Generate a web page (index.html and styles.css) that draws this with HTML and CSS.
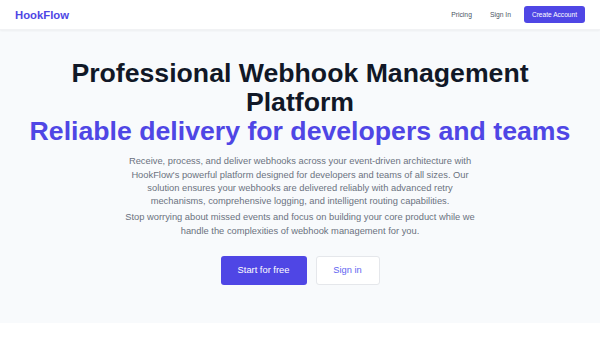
FILE: index.html
```html
<!DOCTYPE html>
<html lang="en">
<head>
    <meta charset="UTF-8">
    <meta name="viewport" content="width=device-width, initial-scale=1.0">
    <title>HookFlow - Webhook Management</title>
    <link rel="stylesheet" href="styles.css">
</head>
<body>
    <header class="site-header">
        <a class="logo" href="#">HookFlow</a>
        <nav class="main-nav">
            <a href="#" class="nav-link">Pricing</a>
            <a href="#" class="nav-link">Sign In</a>
            <a href="#" class="nav-btn">Create Account</a>
        </nav>
    </header>

    <section class="hero">
        <h1 class="hero-title">
            Professional Webhook Management Platform
            <span class="hero-accent">Reliable delivery for developers and teams</span>
        </h1>
        <p class="hero-text">Receive, process, and deliver webhooks across your event-driven architecture with HookFlow's powerful platform designed for developers and teams of all sizes. Our solution ensures your webhooks are delivered reliably with advanced retry mechanisms, comprehensive logging, and intelligent routing capabilities.</p>
        <p class="hero-text">Stop worrying about missed events and focus on building your core product while we handle the complexities of webhook management for you.</p>
        <div class="hero-actions">
            <a href="#" class="btn btn-primary">Start for free</a>
            <a href="#" class="btn btn-outline">Sign in</a>
        </div>
    </section>

    <section class="below"></section>
</body>
</html>
```

FILE: styles.css
```css
body {
    font-family: "Liberation Sans", Arial, sans-serif;
    margin: 0;
    padding: 0;
    background-color: #fff;
    color: #111827;
}

a {
    text-decoration: none;
}

.site-header {
    display: flex;
    justify-content: space-between;
    align-items: center;
    height: 30px;
    padding: 0 15px;
    background: #fff;
    box-shadow: 0 1px 2px rgba(0, 0, 0, 0.05);
    border-bottom: 1px solid #f1f2f4;
    box-sizing: border-box;
    position: relative;
}

.logo {
    font-size: 11.3px;
    font-weight: bold;
    color: #4f46e5;
}

.main-nav {
    display: flex;
    align-items: center;
}

.nav-link {
    font-size: 6.75px;
    color: #4b5563;
    margin-right: 18px;
}

.nav-link + .nav-link {
    margin-right: 13px;
}

.nav-btn {
    font-size: 6.6px;
    color: #fff;
    background: #4f46e5;
    border-radius: 3px;
    padding: 0 8px;
    height: 17px;
    line-height: 17px;
}

.hero {
    background: #f8fafc;
    padding: 29px 20px 38px;
    text-align: center;
}

.hero-title {
    margin: 0;
    font-size: 26.67px;
    line-height: 1.1;
    font-weight: bold;
    color: #111827;
}

.hero-accent {
    display: block;
    line-height: 1;
    color: #4f46e5;
}

.hero-text {
    max-width: 360px;
    margin: 11px auto 0;
    font-size: 9.33px;
    line-height: 13.33px;
    color: #6b7280;
}

.hero-text + .hero-text {
    margin-top: 2.7px;
}

.hero-actions {
    display: flex;
    justify-content: center;
    gap: 9px;
    margin-top: 18px;
}

.btn {
    display: inline-block;
    height: 29px;
    line-height: 29px;
    box-sizing: border-box;
    font-size: 9.33px;
    border-radius: 3px;
}

.btn-primary {
    width: 86px;
    background: #4f46e5;
    color: #fff;
}

.btn-outline {
    width: 64px;
    line-height: 27px;
    background: #fff;
    color: #6366f1;
    border: 1px solid #e5e7eb;
}

.below {
    height: 15px;
    background: #fff;
}
```
